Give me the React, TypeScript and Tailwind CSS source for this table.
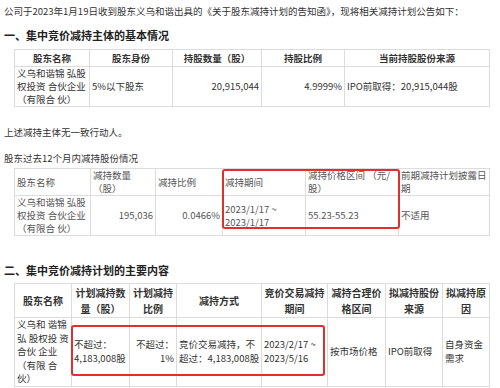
import React from "react"

const font = { fontFamily: '"Noto Sans CJK SC", "Noto Sans", sans-serif' }

const td = "border border-[#dcdcdc] px-[2px] align-middle"

export default function App() {
  return (
    <div
      className="w-[500px] h-[388px] overflow-hidden bg-white text-[#333] text-[9.5px] leading-[13px]"
      style={font}
    >
      <p className="pl-[4px] pt-[5px] whitespace-nowrap">
        公司于2023年1月19日收到股东义乌和谐出具的《关于股东减持计划的告知函》，现将相关减持计划公告如下：
      </p>

      <h2 className="pl-[4px] mt-[10px] text-[11px] leading-[14px] font-bold text-[#222]">
        一、集中竞价减持主体的基本情况
      </h2>

      <table className="ml-[14px] mt-[7px] w-[476px] table-fixed border-collapse">
        <colgroup>
          <col className="w-[75px]" />
          <col className="w-[83px]" />
          <col className="w-[89px]" />
          <col className="w-[83px]" />
          <col />
        </colgroup>
        <thead>
          <tr className="h-[17px] font-bold text-center">
            <td className={td}>股东名称</td>
            <td className={td}>股东身份</td>
            <td className={td}>持股数量（股）</td>
            <td className={td}>持股比例</td>
            <td className={td}>当前持股股份来源</td>
          </tr>
        </thead>
        <tbody>
          <tr className="h-[40px]">
            <td className={td}>
              义乌和谐锦 弘股
              <br />
              权投资 合伙企业
              <br />
              （有限合 伙）
            </td>
            <td className={td}>5%以下股东</td>
            <td className={`${td} text-right`}>20,915,044</td>
            <td className={`${td} text-right`}>4.9999%</td>
            <td className={td}>IPO前取得：20,915,044股</td>
          </tr>
        </tbody>
      </table>

      <p className="pl-[4px] mt-[19px]">上述减持主体无一致行动人。</p>
      <p className="pl-[4px] mt-[13px]">股东过去12个月内减持股份情况</p>

      <div className="relative ml-[14px] mt-[3px] w-[476px]">
        <table className="w-[476px] table-fixed border-collapse text-[#555]">
          <colgroup>
            <col className="w-[76px]" />
            <col className="w-[65px]" />
            <col className="w-[67px]" />
            <col className="w-[83px]" />
            <col className="w-[93px]" />
            <col />
          </colgroup>
          <thead>
            <tr className="h-[26px]">
              <td className={td}>股东名称</td>
              <td className={td}>
                减持数量
                <br />
                （股）
              </td>
              <td className={td}>减持比例</td>
              <td className={td}>减持期间</td>
              <td className={td}>
                减持价格区间 （元/
                <br />
                股）
              </td>
              <td className={td}>
                前期减持计划披露日
                <br />
                期
              </td>
            </tr>
          </thead>
          <tbody>
            <tr className="h-[40px]">
              <td className={td}>
                义乌和谐锦 弘股
                <br />
                权投资 合伙企业
                <br />
                （有限合 伙）
              </td>
              <td className={`${td} text-right`}>195,036</td>
              <td className={`${td} text-right`}>0.0466%</td>
              <td className={td}>
                2023/1/17 ~
                <br />
                2023/1/17
              </td>
              <td className={td}>55.23-55.23</td>
              <td className={td}>不适用</td>
            </tr>
          </tbody>
        </table>
        <div className="absolute left-[208px] top-[1px] w-[178px] h-[60px] border-2 border-[#e0302b] rounded-[3px]" />
      </div>

      <h2 className="pl-[4px] mt-[27px] text-[11px] leading-[14px] font-bold text-[#222]">
        二、集中竞价减持计划的主要内容
      </h2>

      <div className="relative ml-[14px] mt-[6px] w-[476px]">
        <table className="w-[476px] table-fixed border-collapse">
          <colgroup>
            <col className="w-[57px]" />
            <col className="w-[58px]" />
            <col className="w-[47px]" />
            <col className="w-[85px]" />
            <col className="w-[66px]" />
            <col className="w-[58px]" />
            <col className="w-[57px]" />
            <col />
          </colgroup>
          <thead>
            <tr className="h-[34px] font-bold text-center text-[10px] leading-[16px]">
              <td className={td}>股东名称</td>
              <td className={td}>
                计划减持数
                <br />
                量（股）
              </td>
              <td className={td}>
                计划减持
                <br />
                比例
              </td>
              <td className={td}>减持方式</td>
              <td className={td}>
                竞价交易减持
                <br />
                期间
              </td>
              <td className={td}>
                减持合理价
                <br />
                格区间
              </td>
              <td className={td}>
                拟减持股份
                <br />
                来源
              </td>
              <td className={td}>
                拟减持原
                <br />
                因
              </td>
            </tr>
          </thead>
          <tbody>
            <tr className="h-[66px] leading-[13.5px]">
              <td className={td}>
                义乌和 谐锦
                <br />
                弘 股权投 资
                <br />
                合伙 企业
                <br />
                （有限 合
                <br />
                伙）
              </td>
              <td className={td}>
                不超过：
                <br />
                4,183,008股
              </td>
              <td className={`${td} text-right`}>
                不超过：
                <br />
                1%
              </td>
              <td className={`${td} whitespace-nowrap`}>
                竞价交易减持，不
                <br />
                超过：4,183,008股
              </td>
              <td className={td}>
                2023/2/17 ~
                <br />
                2023/5/16
              </td>
              <td className={td}>按市场价格</td>
              <td className={td}>IPO前取得</td>
              <td className={td}>
                自身资金
                <br />
                需求
              </td>
            </tr>
          </tbody>
        </table>
        <div className="absolute left-[57px] top-[42px] w-[254px] h-[51px] border-2 border-[#e0302b] rounded-[3px]" />
      </div>

      <p className="pl-[33px] mt-[2px] whitespace-nowrap">（一）相关股东是否有其他安排 □是 √否</p>
    </div>
  )
}
